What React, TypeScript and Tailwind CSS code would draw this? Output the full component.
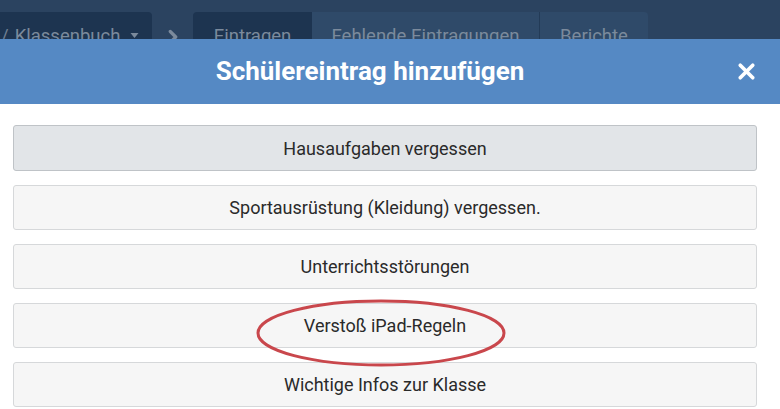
import { ChevronRight, X } from "lucide-react";

const ITEMS = [
  "Hausaufgaben vergessen",
  "Sportausrüstung (Kleidung) vergessen.",
  "Unterrichtsstörungen",
  "Verstoß iPad-Regeln",
  "Wichtige Infos zur Klasse",
];

function NavBar() {
  return (
    <div className="flex h-[39px] shrink-0 items-start overflow-hidden bg-[#2b4360] pt-[12px] text-[18.5px] text-[#7b8a9c]">
      <div className="flex h-[50px] w-[152px] items-center gap-[6px] rounded-tr-[4px] bg-[#1d3450] pl-[1px]">
        <span className="text-[#6f7f92]">/</span>
        <span>Klassenbuch</span>
        <svg viewBox="0 0 8 5" className="ml-[4px] mt-[-3px] h-[5px] w-[9px]" aria-hidden="true">
          <path d="M0 0H8L4 5Z" fill="#7b8a9c" />
        </svg>
      </div>
      <div className="flex h-[50px] w-[41px] items-center justify-center">
        <ChevronRight className="h-[22px] w-[22px] text-[#7b8a9c]" strokeWidth={3.5} />
      </div>
      <div className="flex h-[50px] overflow-hidden rounded-t-[4px]">
        <div className="flex w-[119px] items-center justify-center bg-[#1d3450]">Eintragen</div>
        <div className="flex w-[228px] items-center justify-center border-r border-[#233b57] bg-[#2f4a69]">
          Fehlende Eintragungen
        </div>
        <div className="flex w-[108px] items-center justify-center bg-[#2f4a69]">Berichte</div>
      </div>
    </div>
  );
}

export default function App() {
  return (
    <div className="relative flex h-[409px] w-[780px] flex-col overflow-hidden bg-white font-['Roboto',sans-serif]">
      <NavBar />
      <div className="relative flex h-[65px] shrink-0 items-center justify-center bg-[#5589c4] text-white">
        <h1 className="mr-[40px] text-[26px] font-bold">Schülereintrag hinzufügen</h1>
        <button type="button" className="absolute right-[21px] top-[20px]" aria-label="Schließen">
          <X className="h-[25px] w-[25px]" strokeWidth={3.5} />
        </button>
      </div>
      <div className="flex flex-col gap-[14px] pl-[13px] pr-[23px] pt-[21px]">
        {ITEMS.map((label, i) => (
          <button
            key={label}
            type="button"
            className={
              i === 0
                ? "flex h-[46px] items-center justify-center rounded-[3px] border border-[#bfc3c7] bg-[#e2e5e8] text-[18px] text-[#2a2a2a]"
                : "flex h-[45px] items-center justify-center rounded-[3px] border border-[#d6d8da] bg-[#f6f6f6] text-[18px] text-[#2a2a2a]"
            }
          >
            {label}
          </button>
        ))}
      </div>
      <svg className="pointer-events-none absolute left-0 top-0" width="780" height="409" aria-hidden="true">
        <ellipse cx="381" cy="333" rx="123" ry="32" fill="none" stroke="#c9474c" strokeWidth="3" />
      </svg>
    </div>
  );
}
